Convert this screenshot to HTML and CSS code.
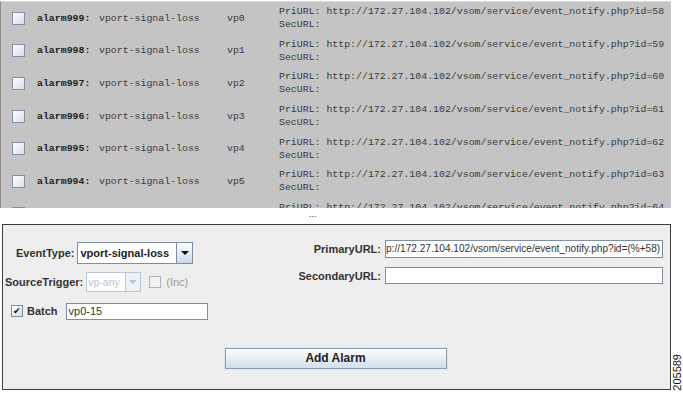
FILE: index.html
```html
<!doctype html>
<html>
<head>
<meta charset="utf-8">
<title>Add Alarm</title>
<link rel="stylesheet" href="styles.css">
</head>
<body>
<div class="page">
	<div class="main">
		<ul class="list">
			<li class="row"><span class="chk"></span><b class="name">alarm999:</b><span class="type">vport-signal-loss</span><span class="port">vp0</span><span class="urls">PriURL: http://172.27.104.102/vsom/service/event_notify.php?id=58<br>SecURL:</span></li>
			<li class="row"><span class="chk"></span><b class="name">alarm998:</b><span class="type">vport-signal-loss</span><span class="port">vp1</span><span class="urls">PriURL: http://172.27.104.102/vsom/service/event_notify.php?id=59<br>SecURL:</span></li>
			<li class="row"><span class="chk"></span><b class="name">alarm997:</b><span class="type">vport-signal-loss</span><span class="port">vp2</span><span class="urls">PriURL: http://172.27.104.102/vsom/service/event_notify.php?id=60<br>SecURL:</span></li>
			<li class="row"><span class="chk"></span><b class="name">alarm996:</b><span class="type">vport-signal-loss</span><span class="port">vp3</span><span class="urls">PriURL: http://172.27.104.102/vsom/service/event_notify.php?id=61<br>SecURL:</span></li>
			<li class="row"><span class="chk"></span><b class="name">alarm995:</b><span class="type">vport-signal-loss</span><span class="port">vp4</span><span class="urls">PriURL: http://172.27.104.102/vsom/service/event_notify.php?id=62<br>SecURL:</span></li>
			<li class="row"><span class="chk"></span><b class="name">alarm994:</b><span class="type">vport-signal-loss</span><span class="port">vp5</span><span class="urls">PriURL: http://172.27.104.102/vsom/service/event_notify.php?id=63<br>SecURL:</span></li>
			<li class="row"><span class="chk"></span><b class="name">alarm993:</b><span class="type">vport-signal-loss</span><span class="port">vp6</span><span class="urls">PriURL: http://172.27.104.102/vsom/service/event_notify.php?id=64<br>SecURL:</span></li>
		</ul>
		<div class="more">...</div>
		<div class="panel">
			<div class="fields">
				<div class="left">
					<div class="line line1">
						<span class="lbl">EventType:</span>
						<span class="combo"><span class="combo-text">vport-signal-loss</span><span class="arrow"><i></i></span></span>
					</div>
					<div class="line line2">
						<span class="lbl">SourceTrigger:</span>
						<span class="combo off"><span class="combo-text">vp-any</span><span class="arrow"><i></i></span></span>
						<span class="box off"></span><span class="inc">(Inc)</span>
					</div>
					<div class="line line3">
						<span class="box on">&#10004;</span><span class="lbl">Batch</span>
						<span class="field batch">vp0-15</span>
					</div>
				</div>
				<div class="right">
					<div class="line rline1">
						<span class="lbl">PrimaryURL:</span>
						<span class="field url">p://172.27.104.102/vsom/service/event_notify.php?id=(%+58)</span>
					</div>
					<div class="line rline2">
						<span class="lbl">SecondaryURL:</span>
						<span class="field url empty"></span>
					</div>
				</div>
			</div>
			<div class="actions"><span class="btn">Add Alarm</span></div>
		</div>
	</div>
	<div class="figno"><span>205589</span></div>
</div>
</body>
</html>
```

FILE: styles.css
```css
html, body { margin: 0; padding: 0; background: #fff; }
body { width: 683px; height: 393px; overflow: hidden; font-family: "Liberation Sans", Arial, sans-serif; }
ul { padding: 0; margin: 0; list-style: none; }

.page { display: flex; height: 393px; }
.main { width: 672px; }

/* alarm list */
.list { height: 206px; margin-top: 1px; background: #c4c4c4; border-left: 1px solid #8c8c8c; border-top: 1px solid #dcdcdc; overflow: hidden; font-family: "Liberation Mono", "Courier New", monospace; font-size: 9.9px; color: #3a3a3a; }
.row { display: flex; align-items: center; height: 32.6px; flex: none; white-space: nowrap; }
.chk { width: 11px; height: 11px; margin-left: 11px; border: 1px solid #8393a3; background: linear-gradient(135deg, #fff, #d6dee8); flex: none; }
.name { width: 62px; margin-left: 12px; color: #222; }
.type { width: 128px; }
.port { width: 52px; }
.urls { line-height: 13px; }

.more { height: 16px; padding-left: 309px; font-size: 9px; line-height: 12px; color: #333; }

/* form panel */
.panel { margin-left: 2px; height: 164px; border: 1px solid #3c3c3c; background: #eeeeee; font-size: 11px; color: #333; }
.fields { display: flex; }
.line { display: flex; align-items: center; }
.lbl { font-weight: bold; white-space: nowrap; }

.left { padding-left: 2px; }
.line1 { margin-top: 17px; height: 22px; padding-left: 11px; gap: 3px; }
.line2 { margin-top: 8px; height: 20px; gap: 3px; }
.line3 { margin-top: 11px; height: 16px; padding-left: 6px; }

.combo { display: flex; height: 20px; border: 1px solid #7d8fa1; background: #fff; }
.line1 .combo { width: 114px; }
.combo-text { flex: 1; padding-left: 2px; font-weight: bold; line-height: 20px; color: #222; overflow: hidden; }
.arrow { width: 15px; border-left: 1px solid #7d8fa1; background: linear-gradient(#fdfdfe, #cbdaea); display: flex; align-items: center; justify-content: center; }
.arrow i { width: 0; height: 0; border-left: 4px solid transparent; border-right: 4px solid transparent; border-top: 4px solid #111; }

.combo.off { width: 53px; height: 18px; border-color: #b7c6d6; }
.combo.off .combo-text { font-weight: normal; font-size: 10.5px; padding-left: 1px; color: #b4c4d6; line-height: 18px; }
.combo.off .arrow { width: 14px; border-color: #b7c6d6; background: #eef1f5; }
.combo.off .arrow i { border-top-color: #b4c4d6; }

.box { width: 10px; height: 10px; border: 1px solid #7d8fa1; background: linear-gradient(135deg, #fff, #d6dee8); font-size: 9px; line-height: 10px; text-align: center; color: #111; }
.box.off { margin-left: 5px; border-color: #a9b2bc; background: #f2f2f2; }
.inc { color: #9a9a9a; margin-left: 2px; }
.line3 .lbl { margin-left: 4px; }

.field { display: block; height: 15px; border: 1px solid #7d8fa1; background: #fff; line-height: 15px; overflow: hidden; white-space: nowrap; color: #333; }
.batch { width: 138px; margin-left: 8px; padding-left: 2px; }

.right { margin-left: auto; margin-right: 7px; }
.right .lbl { width: 120px; text-align: right; margin-right: 4px; }
.rline1 { margin-top: 15px; height: 18px; }
.rline2 { margin-top: 9px; height: 17px; }
.url { width: 276px; }
.rline1 .url { height: 16px; line-height: 16px; font-size: 10.1px; }
.url.empty { height: 15px; }

.actions { display: flex; justify-content: center; margin-top: 29px; padding-right: 2px; }
.btn { width: 220px; height: 19px; border: 1px solid #8b9bab; box-shadow: 0 0 0 1px #dfe4ea; background: linear-gradient(#fcfdfe, #d3dfeb); text-align: center; line-height: 19px; font-size: 12px; font-weight: bold; color: #222; }

.figno { flex: 1; display: flex; align-items: flex-end; justify-content: center; padding-bottom: 2px; }
.figno span { writing-mode: vertical-rl; transform: rotate(180deg); font-size: 11px; color: #111; }
```
